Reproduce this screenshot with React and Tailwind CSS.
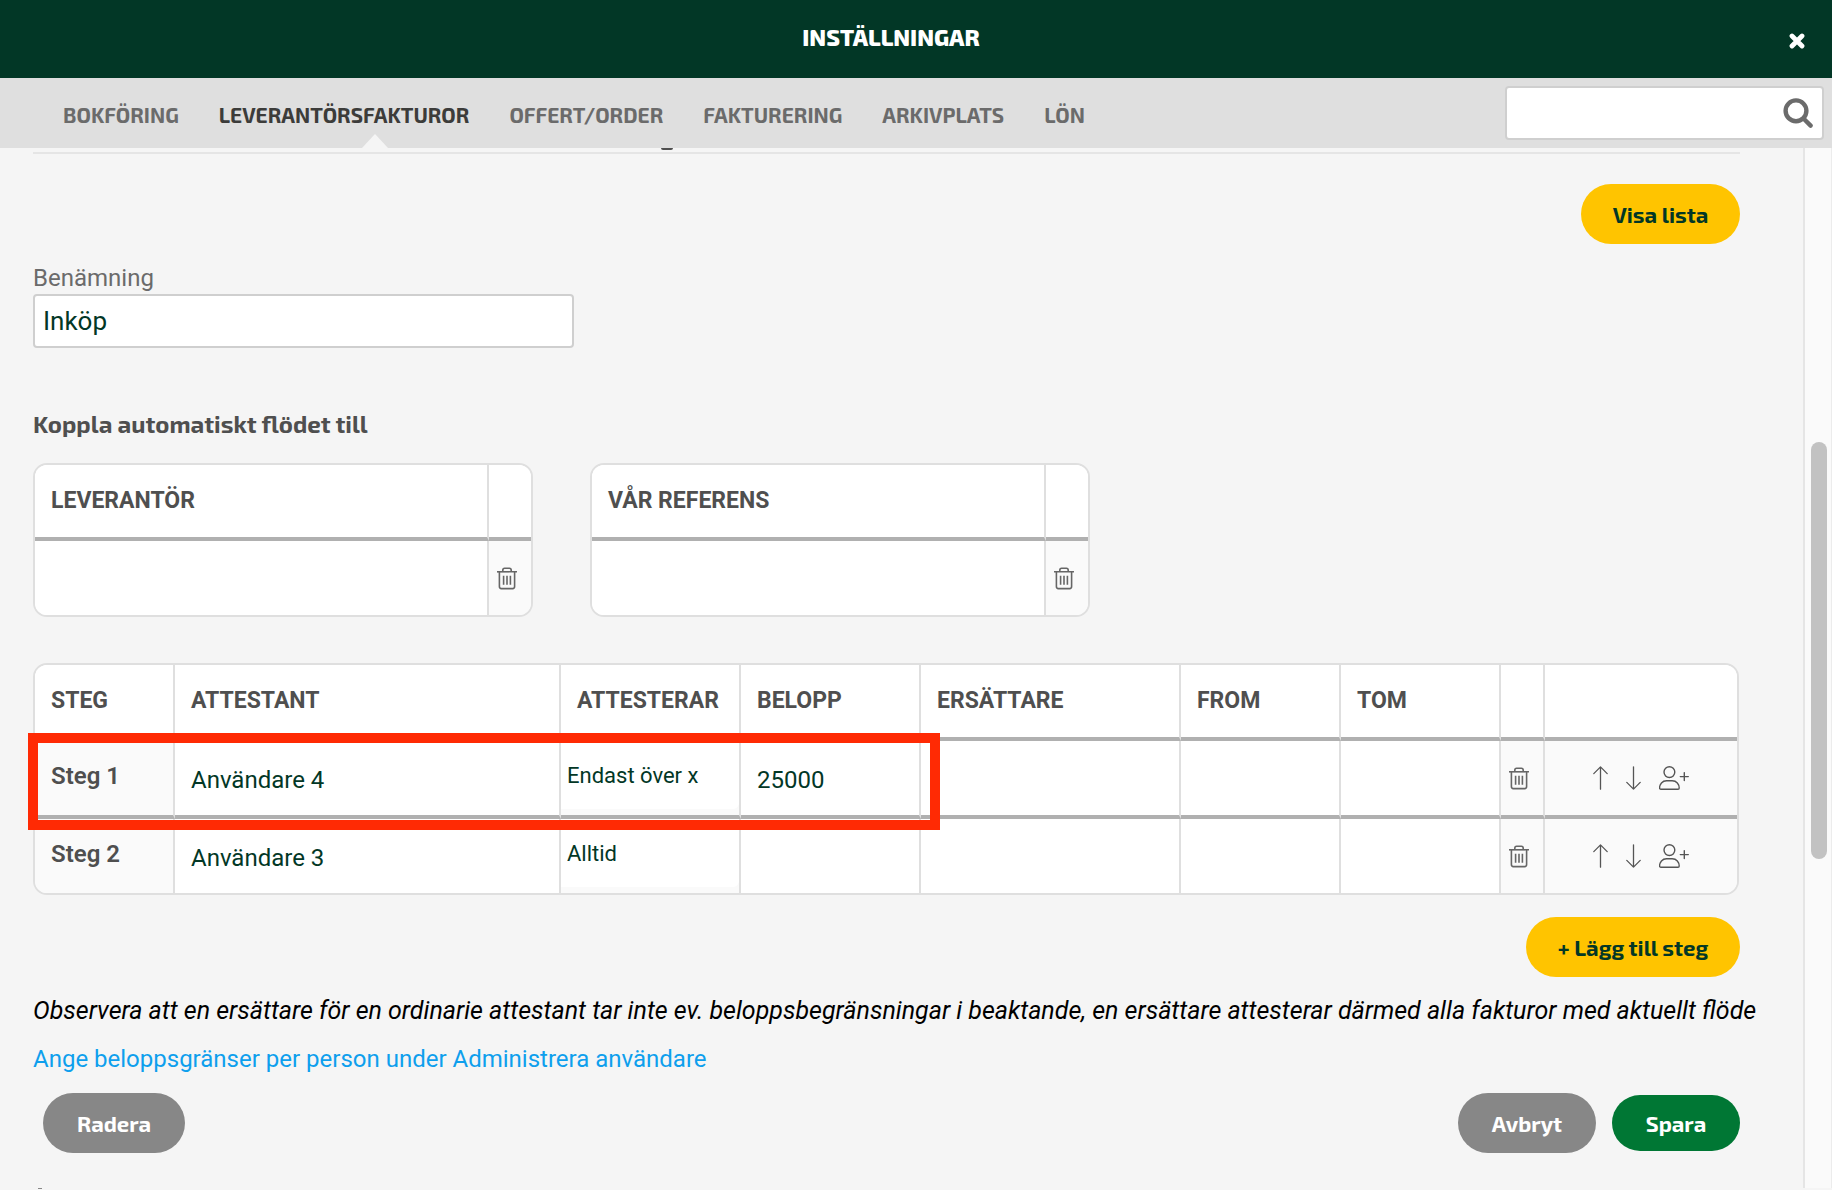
import React from "react";

const DISPLAY = "font-['Exo_2','Noto_Sans',sans-serif]";

const TABS = ["BOKFÖRING", "LEVERANTÖRSFAKTUROR", "OFFERT/ORDER", "FAKTURERING", "ARKIVPLATS", "LÖN"];

const STEPS = [
  { name: "Steg 1", approver: "Användare 4", rule: "Endast över x", amount: "25000" },
  { name: "Steg 2", approver: "Användare 3", rule: "Alltid", amount: "" },
];

function TrashIcon() {
  return (
    <svg width="20" height="24" viewBox="0 0 20 24" fill="none" stroke="#666" strokeWidth="1.6" aria-hidden="true">
      <path d="M0 5.8h20" />
      <path d="M5.8 5.4V4.2c0-1.2.7-2 1.8-2h4.8c1.1 0 1.8.8 1.8 2v1.2" />
      <path d="M2.4 6v14.6c0 1.3.7 2 1.9 2h11.4c1.2 0 1.9-.7 1.9-2V6" />
      <path d="M6.6 9.8v9M10 9.8v9M13.4 9.8v9" />
    </svg>
  );
}

function ArrowUpIcon() {
  return (
    <svg width="15" height="24" viewBox="0 0 15 24" fill="none" stroke="#555" strokeWidth="1.3" strokeLinecap="round" strokeLinejoin="round" aria-hidden="true">
      <path d="M7.5 23.2V.9M.8 7.6 7.5.9l6.7 6.7" />
    </svg>
  );
}

function ArrowDownIcon() {
  return (
    <svg width="15" height="24" viewBox="0 0 15 24" fill="none" stroke="#555" strokeWidth="1.3" strokeLinecap="round" strokeLinejoin="round" aria-hidden="true">
      <path d="M7.5.8v22.3M.8 16.4l6.7 6.7 6.7-6.7" />
    </svg>
  );
}

function AddUserIcon() {
  return (
    <svg width="30" height="24" viewBox="0 0 30 24" fill="none" stroke="#555" strokeWidth="1.4" strokeLinecap="round" strokeLinejoin="round" aria-hidden="true">
      <circle cx="10.4" cy="6.1" r="5.4" />
      <path d="M7.6 14.8h5.6c4.4 0 7 3.4 7 7.2 0 .8-.4 1.2-1.2 1.2H1.8c-.8 0-1.2-.4-1.2-1.2 0-3.8 2.6-7.2 7-7.2Z" />
      <path d="M25.3 6.6v8M21.3 10.6h8" />
    </svg>
  );
}

function SearchIcon() {
  return (
    <svg width="30" height="30" viewBox="0 0 30 30" fill="none" stroke="#6b6b6b" aria-hidden="true">
      <circle cx="13" cy="12.8" r="10.4" strokeWidth="4.4" />
      <path d="m21 21 6.6 6.6" strokeWidth="4.4" strokeLinecap="round" />
    </svg>
  );
}

function CloseIcon() {
  return (
    <svg width="16" height="16" viewBox="0 0 16 16" stroke="#fff" strokeWidth="4.8" strokeLinecap="round" aria-hidden="true">
      <path d="M3 3l10 10M13 3 3 13" />
    </svg>
  );
}

function Pill({ className, children }) {
  return (
    <button type="button" className={`rounded-full text-[22px] font-bold ${DISPLAY} ${className}`}>
      {children}
    </button>
  );
}

function Th({ children }) {
  return (
    <th
      scope="col"
      className="h-[76px] border-b-4 border-r-2 border-b-[#b0b0b0] border-r-[#dfdfdf] bg-white px-4 text-left text-[23px] font-bold whitespace-nowrap text-[#4f4f4f] last:border-r-0"
    >
      {children}
    </th>
  );
}

function CellInput({ label, value = "" }) {
  return (
    <input
      type="text"
      aria-label={label}
      defaultValue={value}
      className="block h-[74px] w-full bg-white px-4 pt-1 text-2xl text-[#023726] outline-none"
    />
  );
}

function IconButton({ label, children }) {
  return (
    <button type="button" aria-label={label} className="block">
      {children}
    </button>
  );
}

function LinkTable({ title }) {
  return (
    <div className="w-[500px] overflow-hidden rounded-[14px] border-2 border-[#dfdfdf] bg-white">
      <table className="w-full table-fixed border-separate border-spacing-0">
        <colgroup>
          <col />
          <col className="w-[42px]" />
        </colgroup>
        <thead>
          <tr>
            <Th>{title}</Th>
            <Th />
          </tr>
        </thead>
        <tbody>
          <tr>
            <td className="border-r-2 border-[#dfdfdf] p-0">
              <CellInput label={title} />
            </td>
            <td className="bg-[#fafafa] p-0 pl-2">
              <IconButton label="Ta bort">
                <TrashIcon />
              </IconButton>
            </td>
          </tr>
        </tbody>
      </table>
    </div>
  );
}

function StepTable() {
  return (
    <div className="relative mr-px">
      <div className="overflow-hidden rounded-[14px] border-2 border-[#dfdfdf] bg-white">
        <table className="w-full table-fixed border-separate border-spacing-0">
          <colgroup>
            <col className="w-[140px]" />
            <col />
            <col className="w-[180px]" />
            <col className="w-[180px]" />
            <col className="w-[260px]" />
            <col className="w-[160px]" />
            <col className="w-[160px]" />
            <col className="w-[44px]" />
            <col className="w-[192px]" />
          </colgroup>
          <thead>
            <tr>
              <Th>STEG</Th>
              <Th>ATTESTANT</Th>
              <Th>ATTESTERAR</Th>
              <Th>BELOPP</Th>
              <Th>ERSÄTTARE</Th>
              <Th>FROM</Th>
              <Th>TOM</Th>
              <Th />
              <Th />
            </tr>
          </thead>
          <tbody className="[&>tr:not(:last-child)>*]:border-b-4 [&>tr>*]:border-b-[#b0b0b0] [&>tr>*:not(:last-child)]:border-r-2 [&>tr>*]:border-r-[#dfdfdf]">
            {STEPS.map((s) => (
              <tr key={s.name}>
                <th scope="row" className="bg-[#fafafa] px-4 pt-0 pb-1 text-left text-2xl font-semibold text-[#4f4f4f]">
                  {s.name}
                </th>
                <td className="p-0">
                  <CellInput label={`Attestant, ${s.name}`} value={s.approver} />
                </td>
                <td className="bg-[#fafafa] p-0 align-top">
                  <select
                    aria-label={`Attesterar, ${s.name}`}
                    defaultValue={s.rule}
                    className="block h-[68px] w-full appearance-none rounded-br-md bg-white px-[6px] text-[22px] text-[#023726] outline-none"
                  >
                    <option>Endast över x</option>
                    <option>Alltid</option>
                  </select>
                </td>
                <td className="p-0">
                  <CellInput label={`Belopp, ${s.name}`} value={s.amount} />
                </td>
                <td className="p-0">
                  <CellInput label={`Ersättare, ${s.name}`} />
                </td>
                <td className="p-0">
                  <CellInput label={`From, ${s.name}`} />
                </td>
                <td className="p-0">
                  <CellInput label={`Tom, ${s.name}`} />
                </td>
                <td className="bg-[#fafafa] p-0 pl-2">
                  <IconButton label="Ta bort">
                    <TrashIcon />
                  </IconButton>
                </td>
                <td className="bg-[#fafafa] p-0">
                  <div className="flex justify-center gap-[18px]">
                    <IconButton label="Flytta upp">
                      <ArrowUpIcon />
                    </IconButton>
                    <IconButton label="Flytta ned">
                      <ArrowDownIcon />
                    </IconButton>
                    <IconButton label="Lägg till attestant">
                      <AddUserIcon />
                    </IconButton>
                  </div>
                </td>
              </tr>
            ))}
          </tbody>
        </table>
      </div>
      {/* Highlight round the first step */}
      <div className="pointer-events-none absolute top-[70px] right-[799px] -left-[5px] h-[97px] border-10 border-[#ff2a04]" />
    </div>
  );
}

export default function App() {
  return (
    <div className="flex h-screen flex-col overflow-hidden bg-[#f5f5f5] font-[Roboto,sans-serif] text-[#023726]">
      <header className="flex h-[78px] shrink-0 items-center bg-[#023726]">
        <h1 className={`flex-1 pb-1 text-center text-[23px] font-extrabold text-white ${DISPLAY}`}>INSTÄLLNINGAR</h1>
        <button type="button" aria-label="Stäng" className="mt-1 mr-5 flex w-[30px] justify-center">
          <CloseIcon />
        </button>
      </header>

      <div className="flex h-[70px] shrink-0 items-center justify-between bg-[#dfdfdf] pr-2 pl-[63px]">
        <nav className={`flex h-full items-center gap-10 text-[21px] font-bold ${DISPLAY}`}>
          {TABS.map((t, i) => (
            <a
              key={t}
              href="#"
              className={`relative flex h-full items-center pt-[3px] ${i === 1 ? "text-[#3c3c3a]" : "text-[#6b6b6b]"}`}
            >
              {t}
              {i === 1 && (
                <svg className="absolute bottom-0 left-[143px]" width="26" height="14" viewBox="0 0 26 14" aria-hidden="true">
                  <path d="M13 0 26 14H0Z" fill="#f5f5f5" />
                </svg>
              )}
            </a>
          ))}
        </nav>
        <div className="flex h-[54px] w-[319px] items-center rounded border-2 border-[#cfcfcf] bg-white pr-[9px]">
          <input type="text" aria-label="Sök" className="h-full min-w-0 flex-1 bg-transparent px-2 text-2xl outline-none" />
          <button type="button" aria-label="Sök">
            <SearchIcon />
          </button>
        </div>
      </div>

      <div className="flex min-h-0 flex-1">
        <main className="min-w-0 flex-1 overflow-hidden pr-[63px] pl-[33px]">
          <div className="h-1.5 border-b-2 border-[#e5e5e5]">
            <div className="ml-[628px] h-0.5 w-3 rounded-b-full bg-[#4f4f4f]" />
          </div>

          <div className="mt-[30px] flex justify-end">
            <Pill className="h-[60px] w-[159px] bg-[#ffc400] text-[#023726]">Visa lista</Pill>
          </div>

          <div className="mt-5 w-[541px]">
            <label htmlFor="name" className="block pb-0.5 text-2xl leading-7 text-[#6b6b6b]">
              Benämning
            </label>
            <input
              id="name"
              type="text"
              defaultValue="Inköp"
              className="block h-[54px] w-full rounded border-2 border-[#cfcfcf] bg-white px-2 text-[26px] outline-none"
            />
          </div>

          <h2 className={`mt-[60px] text-2xl font-bold text-[#4f4f4f] ${DISPLAY}`}>Koppla automatiskt flödet till</h2>

          <div className="mt-[23px] flex gap-[57px]">
            <LinkTable title="LEVERANTÖR" />
            <LinkTable title="VÅR REFERENS" />
          </div>

          <div className="mt-[46px]">
            <StepTable />
          </div>

          <div className="mt-[22px] flex justify-end">
            <Pill className="h-[60px] w-[214px] bg-[#ffc400] text-[#023726]">+ Lägg till steg</Pill>
          </div>

          <p className="mt-[18px] text-[25px] leading-8 whitespace-nowrap text-black italic">
            Observera att en ersättare för en ordinarie attestant tar inte ev. beloppsbegränsningar i beaktande, en ersättare attesterar därmed alla fakturor med aktuellt flöde
          </p>
          <a href="#" className="mt-4 block w-fit text-2xl text-[#0e9fed]">
            Ange beloppsgränser per person under Administrera användare
          </a>

          <div className="mt-[18px] flex items-center pl-2.5 text-white">
            <Pill className="h-[60px] w-[142px] bg-[#878787]">Radera</Pill>
            <Pill className="ml-auto h-[60px] w-[138px] bg-[#878787]">Avbryt</Pill>
            <Pill className="ml-4 h-14 w-32 bg-[#007734]">Spara</Pill>
          </div>
          <div className="mt-[35px] ml-[5px] h-px w-1 bg-[#878787]" />
        </main>
        <div className="mb-0.5 w-[29px] border-r border-l-2 border-r-[#ececec] border-l-[#e5e5e5] bg-[#fafafa] pt-[294px]">
          <div className="ml-1.5 h-[417px] w-4 rounded-full bg-[#c2c2c2]" />
        </div>
      </div>
    </div>
  );
}
